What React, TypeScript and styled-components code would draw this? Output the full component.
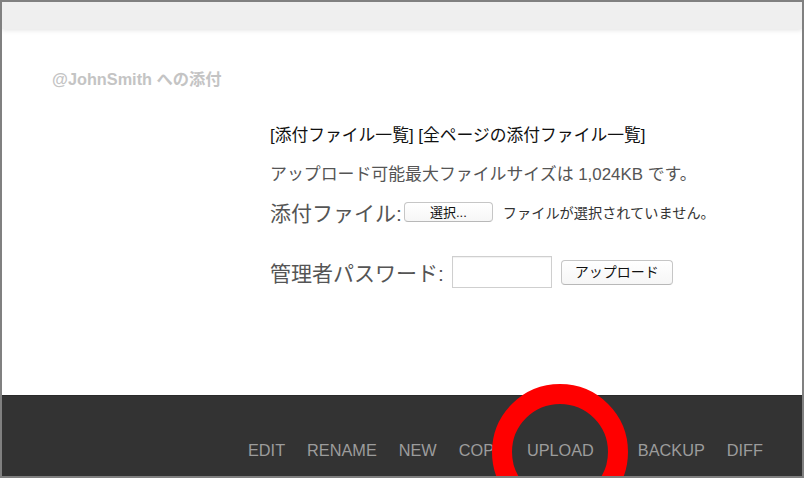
import React from "react";
import styled, { createGlobalStyle } from "styled-components";

const Global = createGlobalStyle`
  html, body { margin: 0; padding: 0; background: #ffffff; }
  body { font-family: "Liberation Sans", "Noto Sans CJK JP", sans-serif; }
  * { box-sizing: border-box; }
`;

const Frame = styled.div`
  position: relative;
  width: 804px;
  height: 478px;
  border: 2px solid #808080;
  display: flex;
  flex-direction: column;
  overflow: hidden;
  background: #ffffff;
`;

const TopBar = styled.div`
  height: 27px;
  flex: none;
  background: #efefef;
  box-shadow: 0 1px 5px rgba(0, 0, 0, 0.12);
  position: relative;
  z-index: 1;
`;

const Main = styled.main`
  flex: 1;
  padding: 40px 0 0 50px;
  display: flex;
  flex-direction: column;
`;

const PageTitle = styled.h2`
  margin: 0;
  font-size: 16.3px;
  line-height: 20px;
  font-weight: bold;
  color: #c4c4c4;
  font-family: "Liberation Sans", "Noto Sans CJK JP", sans-serif;
`;

const Form = styled.div`
  margin-left: 218px;
  display: flex;
  flex-direction: column;
`;

const Row = styled.div<{ $top: number; $h: number }>`
  margin-top: ${(p) => p.$top}px;
  height: ${(p) => p.$h}px;
  display: flex;
  align-items: center;
  white-space: nowrap;
`;

const Links = styled.span`
  font-size: 16.8px;
  color: #111;
  font-family: "Liberation Sans", "Noto Sans CJK JP", sans-serif;
  a { color: #111; text-decoration: none; }
`;

const Note = styled.span`
  font-size: 16.9px;
  color: #555;
`;

const Label = styled.label`
  font-size: 21px;
  color: #555;
  margin-right: 2px;
`;

const Button = styled.button<{ $w: number; $h: number; $fs: number }>`
  width: ${(p) => p.$w}px;
  height: ${(p) => p.$h}px;
  font-size: ${(p) => p.$fs}px;
  font-family: "Liberation Sans", "Noto Sans CJK JP", sans-serif;
  color: #111;
  background: linear-gradient(#ffffff, #f6f6f6);
  border: 1px solid #c6c6c6;
  border-bottom-color: #b8b8b8;
  border-radius: 4px;
  padding: 0;
  display: flex;
  align-items: center;
  justify-content: center;
  line-height: 1;
`;

const NoFile = styled.span`
  font-size: 14.2px;
  color: #333;
  margin-left: 10px;
`;

const PasswordInput = styled.input`
  width: 100px;
  height: 32px;
  border: 1px solid #cfcfcf;
  box-shadow: inset 0 1px 1px rgba(0, 0, 0, 0.06);
  margin: 0 9px 0 6px;
  padding: 0 4px;
  font-size: 14px;
`;

const Footer = styled.footer`
  height: 81px;
  flex: none;
  background: #333333;
  border-top: 1px solid #2a2a2a;
  display: flex;
  justify-content: flex-end;
  align-items: flex-start;
  gap: 22px;
  padding: 44px 39px 0 0;
`;

const NavItem = styled.a<{ $active?: boolean }>`
  font-size: 16.3px;
  line-height: 20px;
  color: #9c9c9c;
  text-decoration: none;
  font-family: "Liberation Sans", sans-serif;
  margin-right: ${(p) => (p.$active ? 22 : 0)}px;
`;

const Highlight = styled.div`
  position: absolute;
  left: 490px;
  top: 382px;
  width: 136px;
  height: 136px;
  border: 20px solid #ff0000;
  border-radius: 50%;
  pointer-events: none;
  z-index: 5;
`;

export default function App() {
  const nav = ["EDIT", "RENAME", "NEW", "COPY", "UPLOAD", "BACKUP", "DIFF"];
  return (
    <>
      <Global />
      <Frame>
        <TopBar />
        <Main>
          <PageTitle>@JohnSmith への添付</PageTitle>
          <Form>
            <Row $top={32} $h={26}>
              <Links>
                [<a href="#">添付ファイル一覧</a>] [<a href="#">全ページの添付ファイル一覧</a>]
              </Links>
            </Row>
            <Row $top={12} $h={26}>
              <Note>アップロード可能最大ファイルサイズは 1,024KB です。</Note>
            </Row>
            <Row $top={13} $h={28}>
              <Label>添付ファイル:</Label>
              <Button $w={89} $h={20} $fs={13}>選択...</Button>
              <NoFile>ファイルが選択されていません。</NoFile>
            </Row>
            <Row $top={30} $h={32}>
              <Label>管理者パスワード:</Label>
              <PasswordInput type="password" />
              <Button $w={112} $h={25} $fs={14}>アップロード</Button>
            </Row>
          </Form>
        </Main>
        <Footer>
          {nav.map((n) => (
            <NavItem key={n} href="#" $active={n === "UPLOAD"}>{n}</NavItem>
          ))}
        </Footer>
        <Highlight />
      </Frame>
    </>
  );
}
